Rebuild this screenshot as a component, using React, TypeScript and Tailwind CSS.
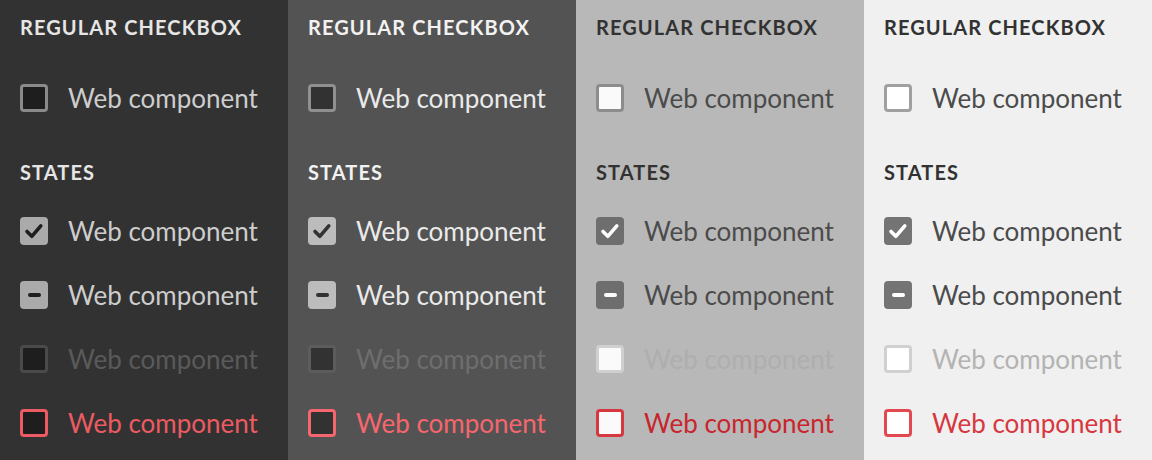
type Theme = {
  bg: string;
  head: string;
  text: string;
  boxBorder: string;
  boxFill: string;
  onFill: string;
  mark: string;
  disBorder: string;
  disFill: string;
  disText: string;
  errBorder: string;
  errText: string;
};

const themes: Theme[] = [
  {
    bg: "bg-[#323232]",
    head: "text-[#e6e6e6]",
    text: "text-[#cdcdcd]",
    boxBorder: "border-[#8a8a8a]",
    boxFill: "bg-[#1e1e1e]",
    onFill: "bg-[#aaaaaa]",
    mark: "text-[#1e1e1e]",
    disBorder: "border-[#4a4a4a]",
    disFill: "bg-[#1e1e1e]",
    disText: "text-[#5a5a5a]",
    errBorder: "border-[#ec5b62]",
    errText: "text-[#ec5b62]",
  },
  {
    bg: "bg-[#535353]",
    head: "text-[#f2f2f2]",
    text: "text-[#eaeaea]",
    boxBorder: "border-[#909090]",
    boxFill: "bg-[#323232]",
    onFill: "bg-[#bcbcbc]",
    mark: "text-[#323232]",
    disBorder: "border-[#5c5c5c]",
    disFill: "bg-[#323232]",
    disText: "text-[#6e6e6e]",
    errBorder: "border-[#f6666e]",
    errText: "text-[#f6666e]",
  },
  {
    bg: "bg-[#b8b8b8]",
    head: "text-[#323232]",
    text: "text-[#4b4b4b]",
    boxBorder: "border-[#8c8c8c]",
    boxFill: "bg-[#fafafa]",
    onFill: "bg-[#6e6e6e]",
    mark: "text-[#fafafa]",
    disBorder: "border-[#d0d0d0]",
    disFill: "bg-[#fafafa]",
    disText: "text-[#aeaeae]",
    errBorder: "border-[#d7373f]",
    errText: "text-[#c9252d]",
  },
  {
    bg: "bg-[#f0f0f0]",
    head: "text-[#323232]",
    text: "text-[#4b4b4b]",
    boxBorder: "border-[#a0a0a0]",
    boxFill: "bg-[#ffffff]",
    onFill: "bg-[#747474]",
    mark: "text-[#ffffff]",
    disBorder: "border-[#d0d0d0]",
    disFill: "bg-[#ffffff]",
    disText: "text-[#b3b3b3]",
    errBorder: "border-[#e34850]",
    errText: "text-[#d7373f]",
  },
];

type State = "off" | "on" | "mixed" | "disabled" | "error";

function Box({ t, state }: { t: Theme; state: State }) {
  if (state === "on" || state === "mixed") {
    return (
      <span className={`flex h-[28px] w-[28px] shrink-0 items-center justify-center rounded-[4px] ${t.onFill} ${t.mark}`}>
        {state === "on" ? (
          <svg width="28" height="28" viewBox="0 0 28 28" fill="none">
            <path d="M7 14.5 L11.8 19.3 L20.8 8.8" stroke="currentColor" strokeWidth="3.6" strokeLinecap="round" strokeLinejoin="round" />
          </svg>
        ) : (
          <span className="h-[4px] w-[13px] rounded-full bg-current" />
        )}
      </span>
    );
  }
  const border =
    state === "disabled" ? t.disBorder : state === "error" ? t.errBorder : t.boxBorder;
  const fill = state === "disabled" ? t.disFill : t.boxFill;
  return <span className={`h-[28px] w-[28px] shrink-0 rounded-[4px] border-[3px] ${border} ${fill}`} />;
}

function Row({ t, state }: { t: Theme; state: State }) {
  const color =
    state === "disabled" ? t.disText : state === "error" ? t.errText : t.text;
  return (
    <div className="flex h-[64px] items-center gap-[20px]">
      <Box t={t} state={state} />
      <span className={`text-[26px] leading-[32px] ${color}`}>Web component</span>
    </div>
  );
}

function Column({ t }: { t: Theme }) {
  return (
    <div className={`flex h-[460px] flex-col px-[20px] ${t.bg}`}>
      <div className="h-[66px] pt-[13px]">
        <h2 className={`text-[20px] font-bold uppercase leading-[28px] tracking-[0.055em] ${t.head}`}>
          Regular checkbox
        </h2>
      </div>
      <Row t={t} state="off" />
      <div className="h-[69px] pt-[28px]">
        <h2 className={`text-[20px] font-bold uppercase leading-[28px] tracking-[0.055em] ${t.head}`}>
          States
        </h2>
      </div>
      <Row t={t} state="on" />
      <Row t={t} state="mixed" />
      <Row t={t} state="disabled" />
      <Row t={t} state="error" />
    </div>
  );
}

export default function App() {
  return (
    <div className="grid w-[1152px] grid-cols-4 overflow-hidden font-['Lato',_'Open_Sans',_sans-serif]">
      {themes.map((t, i) => (
        <Column key={i} t={t} />
      ))}
    </div>
  );
}
